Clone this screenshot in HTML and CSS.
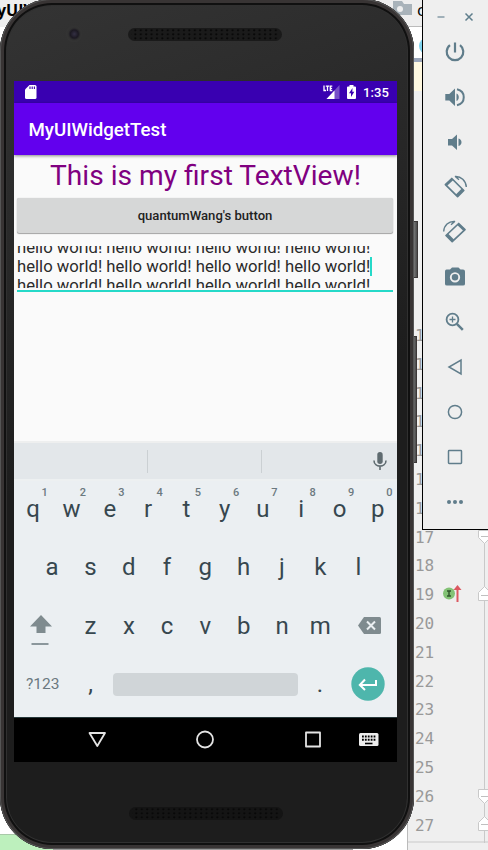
FILE: index.html
```html
<!DOCTYPE html>
<html lang="en">
<head>
<meta charset="utf-8">
<title>Emulator</title>
<link rel="stylesheet" href="styles.css">
</head>
<body>
<div class="desktop">
  <div class="ide">
    <div class="tree"><b class="crumb">yUIW</b><div class="tree-bottom"><b>"</b></div></div>
    <div class="editor">
      <div class="nav-row"><svg width="20" height="16" viewBox="0 0 20 16"><path d="M0 1h9l2 3h8v11H0z" fill="#a9b3ba"/><circle cx="7" cy="9" r="3" fill="#eee"/></svg><span>c</span></div>
      <div class="tab-row"><i></i></div>
      <div class="hint-row"></div>
      <div class="gutter">
        <ol class="lines"><li>10</li><li>11</li><li>12</li><li>13</li><li>14</li><li>15</li><li>16</li><li>17</li><li>18</li><li>19</li><li>20</li><li>21</li><li>22</li><li>23</li><li>24</li><li>25</li><li>26</li><li>27</li></ol>
        <svg class="marker" width="20" height="18" viewBox="0 0 20 18"><circle cx="6" cy="8.500" r="6" fill="#83c275"/><path d="M4 6h4M6 6v5M4 11h4" stroke="#31542b" stroke-width="1.400"/><path d="M14.500 17V3" stroke="#db5860" stroke-width="2"/><path d="M10.500 5l4-5 4 5z" fill="#db5860"/></svg>
        <svg class="folds" width="10" height="320" viewBox="0 0 10 320"><path d="M6.500 0V320" stroke="#c9c9c9"/><g fill="#fff" stroke="#c9c9c9"><path d="M.5 7.500v7l6 6 6-6v-7z"/><path d="M.5 77.500v-8l6-6 6 6v8z"/><path d="M.5 266.500v8l6 6 6-6v-8z"/><path d="M.5 307.500v-8l6-6 6 6v8z"/></g><path d="M3 13.500h7M3 72.500h7M3 273.500h7M3 301.500h7" stroke="#c0c0c0"/></svg>
      </div>
    </div>
  </div>

  <div class="side-key power"></div>
  <div class="side-key volume"></div>

  <div class="phone">
    <div class="bezel top"><div class="camera"></div><svg class="grille" width="154" height="13"><defs><pattern id="dots" width="5.400" height="4" patternUnits="userSpaceOnUse"><circle cx="2" cy="2.300" r="1.100" fill="#080808"/></pattern></defs><rect width="154" height="13" rx="6.500" fill="#1a1a1a"/><rect x="3" width="148" height="12" fill="url(#dots)"/></svg></div>
    <div class="screen">
      <div class="status">
        <svg width="12" height="14" viewBox="0 0 12 14"><path d="M4.500 0H10q1.500 0 1.500 1.500v11Q11.500 14 10 14H1.500Q0 14 0 12.500V4.500z" fill="#fff"/><path d="M5 1.500v2.500M7.200 1.500v2.500M9.400 1.500v2.500" stroke="#3900b1" stroke-width="1.100"/></svg>
        <span class="grow"></span>
        <svg class="signal" width="17" height="14" viewBox="0 0 17 14"><path d="M16.500 0v14H3.500z" fill="#7650c8"/><path d="M11.500 5.400V14H3.500z" fill="#fff"/><path d="M0 0h9.500v7H0z" fill="#3900b1"/><path d="M1 .5v5h2M2.800 1.100h3.400M4.500 1v5M9.300 1.100H7.300v4.400h2M7.300 3.300h1.800" fill="none" stroke="#fff" stroke-width="1.300"/></svg>
        <svg class="battery" width="9" height="14" viewBox="0 0 9 14"><path d="M2.500 0h4v1.500H8q1 0 1 1V13q0 1-1 1H1q-1 0-1-1V2.500q0-1 1-1h1.500z" fill="#fff"/><path d="M5.500 3L2 8.300h2V12l3.300-5.300h-2z" fill="#3900b1"/></svg>
        <span class="clock">1:35</span>
      </div>
      <div class="appbar">MyUIWidgetTest</div>
      <div class="content">
        <div class="headline">This is my first TextView!</div>
        <div class="button">quantumWang's button</div>
        <div class="edit"><div class="edit-text"><div>hello world! hello world! hello world! hello world!</div><div class="current">hello world! hello world! hello world! hello world!<i class="caret"></i></div><div>hello world! hello world! hello world! hello world!</div></div></div>
      </div>
      <div class="keyboard">
        <div class="suggest"><i></i><i></i><span><svg width="14" height="19" viewBox="0 0 14 19"><rect x="4.300" y="0" width="5.400" height="12" rx="2.700" fill="#5f6b70"/><path d="M1 8.500c0 7.500 12 7.500 12 0M7 14v4" fill="none" stroke="#5f6b70" stroke-width="1.600"/></svg></span></div>
        <div class="keys">
          <div class="row"><b>q<sup>1</sup></b><b>w<sup>2</sup></b><b>e<sup>3</sup></b><b>r<sup>4</sup></b><b>t<sup>5</sup></b><b>y<sup>6</sup></b><b>u<sup>7</sup></b><b>i<sup>8</sup></b><b>o<sup>9</sup></b><b>p<sup>0</sup></b></div>
          <div class="row inset"><b>a</b><b>s</b><b>d</b><b>f</b><b>g</b><b>h</b><b>j</b><b>k</b><b>l</b></div>
          <div class="row third"><span class="wide"><svg class="shift" width="22" height="31" viewBox="0 0 22 31"><path d="M11 0l11 11.500h-6.500V18h-9v-6.500H0z" fill="#7f8b8f"/><path d="M1.500 29h17" stroke="#8b979c" stroke-width="2"/></svg></span><b>z</b><b>x</b><b>c</b><b>v</b><b>b</b><b>n</b><b>m</b><span class="wide back"><svg width="23" height="17" viewBox="0 0 23 17"><path d="M6 0h15.500Q23 0 23 1.500v14Q23 17 21.500 17H6L0 8.500z" fill="#7f8b8f"/><path d="M9 4.500l8 8m0-8l-8 8" stroke="#ebeff2" stroke-width="2"/></svg></span></div>
          <div class="row last"><span class="wide sym">?123</span><b>,</b><span class="space"></span><b>.</b><span class="wide enter"><svg width="34" height="34" viewBox="0 0 34 34"><circle cx="17" cy="17" r="16.700" fill="#4eb6ac"/><path d="M25 13v5H9m5-5.500L8.800 18l5.200 5" fill="none" stroke="#fff" stroke-width="2"/></svg></span></div>
        </div>
      </div>
      <div class="navbar">
        <svg width="383" height="45" viewBox="0 0 383 45" fill="none" stroke="#e4e4e4" stroke-width="1.800" stroke-linejoin="round"><path d="M75.500 15h15.500l-7.700 13z"/><circle cx="191" cy="21.500" r="8"/><path d="M292 14.500h14v14h-14z"/><rect x="345" y="15" width="19.500" height="13" rx="1.500" fill="#eee" stroke="none"/><path d="M348 18.500h14M348 21.700h14" stroke="#000" stroke-width="2" stroke-dasharray="1.800 1.100"/><path d="M351 25.500h7.500" stroke="#000" stroke-width="1.600"/></svg>
      </div>
    </div>
    <div class="bezel bottom"><svg class="grille" width="154" height="13"><rect width="154" height="13" rx="6.500" fill="#141414"/><rect x="3" width="148" height="12" fill="url(#dots)"/></svg></div>
  </div>

  <div class="toolbar">
    <div class="window-buttons"><svg width="64" height="20" viewBox="0 0 64 20"><path d="M14.500 9h7" stroke="#a0b0b9" stroke-width="2"/><path d="M42.500 5.500l7 7m0-7l-7 7" stroke="#5f7e8c" stroke-width="1.500"/></svg></div>
    <svg viewBox="0 0 24 24"><path d="M12 2.500v10M7 5.200a8.300 8.300 0 1 0 10 0" fill="none" stroke="#607d8b" stroke-width="2.200"/></svg>
    <svg viewBox="0 0 24 24"><path d="M2.300 9v6.500h4L12 21V3.500L6.300 9z" fill="#607d8b"/><path d="M13.500 8.500c3 1 3 6.500 0 7.500z" fill="#607d8b"/><path d="M14 4.300c9 2 9 14 0 16" fill="none" stroke="#607d8b" stroke-width="2"/></svg>
    <svg viewBox="0 0 24 24"><path d="M5 9v6.500h4L14 20V4.500L9 9z" fill="#607d8b"/><path d="M15.500 8.500c4 1 4 6.500 0 7.500z" fill="#607d8b"/></svg>
    <svg viewBox="0 0 24 24"><path d="M8.800 3.500L20.800 15.500l-6.200 6.200L2.400 9.600z" fill="none" stroke="#607d8b" stroke-width="1.700" stroke-linejoin="round"/><path d="M2.400 9.600l6.400-6.100 1.500 1.500-6.400 6.100zM20.800 15.500l-6.200 6.200-2-2 6.200-6.200z" fill="#607d8b"/><path d="M12 1.500c6-.5 11 4.500 11.300 10.500M12 1.200l4 3.500" fill="none" stroke="#607d8b" stroke-width="1.400"/></svg>
    <svg viewBox="0 0 24 24"><path d="M15.700 3.500L3 15.500l6.200 6.200L22 9.600z" fill="none" stroke="#607d8b" stroke-width="1.700" stroke-linejoin="round"/><path d="M22 9.600l-6.300-6.100-1.500 1.500 6.300 6.100zM3 15.500l6.200 6.200 2-2L5 13.500z" fill="#607d8b"/><path d="M12 1.500C5.500 1 1 5.500.7 11.500M12 1.200L8 4.700" fill="none" stroke="#607d8b" stroke-width="1.400"/></svg>
    <svg viewBox="0 0 24 24"><path d="M3.500 4.500H7l2-2h6.500l2 2H20q2 0 2 2V19q0 1.500-2 1.500H4Q2 20.500 2 19V6.500q0-2 1.500-2z" fill="#607d8b"/><circle cx="12" cy="12.300" r="4.200" fill="none" stroke="#efefef" stroke-width="1.900"/></svg>
    <svg viewBox="0 0 24 24"><g fill="none" stroke="#607d8b"><circle cx="9.500" cy="9.500" r="5.900" stroke-width="1.800"/><path d="M9.500 6.500v6M6.500 9.500h6" stroke-width="1.300"/><path d="M13.800 13.800l6 6" stroke-width="2.500"/></g></svg>
    <svg viewBox="0 0 24 24"><path d="M18 5v14L6 12z" fill="none" stroke="#607d8b" stroke-width="1.500"/></svg>
    <svg viewBox="0 0 24 24"><circle cx="12" cy="12" r="6.600" fill="none" stroke="#607d8b" stroke-width="1.500"/></svg>
    <svg viewBox="0 0 24 24"><rect x="5.500" y="5.500" width="13" height="13" rx=".7" fill="none" stroke="#607d8b" stroke-width="1.500"/></svg>
    <svg viewBox="0 0 24 24"><g fill="#607d8b"><circle cx="6" cy="12" r="2"/><circle cx="12" cy="12" r="2"/><circle cx="18" cy="12" r="2"/></g></svg>
  </div>
</div>
</body>
</html>
```
FILE: styles.css
```css
* { box-sizing: border-box; }
body { margin: 0; font-family: Roboto, sans-serif; }
svg { display: block; flex: none; }
.desktop { position: relative; width: 488px; height: 850px; overflow: hidden; background: #fff; }
.ide { display: flex; height: 850px; }
.tree { width: 407px; display: flex; flex-direction: column; justify-content: space-between; background: linear-gradient(#eee 0 27px, #fff 27px); }
.crumb { font: bold 16px/20px "Open Sans", sans-serif; margin-left: -3px; color: #000; }
.tree-bottom { width: 353px; height: 16px; background: linear-gradient(90deg, #bdf0bd 0 53px, #9a9a9a 53px); border-top: 1px solid #a9c9a9; overflow: hidden; padding-left: 32px; color: #1c2a80; font: bold 18px/26px "Liberation Mono", monospace; }
.editor { flex: 1; border-left: 1px solid #bbb; background: #efefef; }
.nav-row { height: 27px; margin-left: -15px; display: flex; gap: 4px; font: 17px/20px "Open Sans", sans-serif; color: #000; background: #eee; border-bottom: 1px solid #bbb; }
.tab-row { height: 35px; background: #fff; border-bottom: 4px solid #9ba5b9; padding: 11px 0 0 11px; }
.tab-row i { display: block; width: 16px; height: 16px; border-radius: 50%; background: #7fd3ee; }
.hint-row { height: 29px; background: #fff8e0; }
.gutter { position: relative; padding: 231px 0 0 7px; height: 752px; border-bottom: 2px solid #dcdcdc; }
.lines { list-style: none; margin: 0; padding: 0; font: 16px/28.8px "DejaVu Sans Mono", monospace; color: #999; letter-spacing: -.1px; }
.marker { position: absolute; left: 35px; top: 494px; }
.folds { position: absolute; right: 0; top: 432px; }
.side-key { position: absolute; background: linear-gradient(90deg, #777, #4a4a4a); border: 1px solid #3b3737; }
.power { left: 413px; top: 221px; width: 5px; height: 57px; }
.volume { left: 412px; top: 336px; width: 5px; height: 127px; }
.phone { position: absolute; left: 0; top: -1px; width: 414px; height: 850px; padding: 0 17px 0 14px; border-radius: 52px; background: linear-gradient(160deg, #343434, #292929 25%, #1d1d1d 50%, #1d1d1d); box-shadow: inset 0 0 0 1px #555, inset 0 0 0 4px #383434, inset 0 0 0 6px #101010, inset 0 0 0 7px #303030; }
.bezel { height: 82px; display: flex; align-items: flex-start; }
.top { padding: 29px 0 0 52px; }
.camera { width: 16px; height: 16px; margin-top: -2px; margin-left: 0; border-radius: 50%; background: radial-gradient(circle at 52% 50%, #343044 0, #1c1922 4px, #303030 6px, #343434 8px); }
.top .grille { margin-left: 46px; }
.bottom { padding: 45px 0 0 115px; }
.screen { width: 383px; height: 681px; overflow: hidden; display: flex; flex-direction: column; background: #fafafa; }
.status { height: 22px; background: #3900b1; display: flex; align-items: center; padding: 0 8px 0 11px; color: #fff; }
.grow { flex: 1; }
.signal { margin-right: 7px; }
.battery { margin-right: 7px; }
.clock { font-weight: 500; font-size: 13px; line-height: 22px; letter-spacing: .1px; padding-top: 1px; }
.appbar { height: 52px; background: #6200ee; color: #fff; font-weight: 500; font-size: 18.7px; line-height: 54px; padding-left: 14.5px; box-shadow: 0 1px 3px #0007; position: relative; flex: none; }
.content { height: 286px; flex: none; }
.headline { height: 42px; line-height: 42px; font-size: 28.15px; color: #800080; text-align: center; white-space: nowrap; }
.button { height: 35px; margin: 1px 4px 0 3px; background: #d6d7d7; border-radius: 2px; box-shadow: 0 1px 1px #0005, 0 0 1px #0004; text-align: center; font-weight: 500; font-size: 13.1px; line-height: 36px; color: #222; }
.edit { height: 46px; margin: 13px 4px 0 3px; border-bottom: 2px solid #25d9c8; }
.edit-text { height: 42px; overflow: hidden; font-size: 16.68px; line-height: 19.4px; color: #2b2b2b; white-space: nowrap; }
.edit-text div:first-child { margin-top: -8.4px; }
.current { display: flex; }
.caret { width: 2px; height: 19px; background: #25d9c8; }
.keyboard { height: 276px; flex: none; background: #ebeff2; }
.suggest { height: 40px; display: flex; align-items: center; background: #e3e7ea; border-top: 2px solid #eeefef; border-bottom: 2px solid #edf0f1; }
.suggest i { height: 23px; width: 134px; border-right: 1px solid #cbd0d3; }
.suggest i + i { width: 114px; }
.suggest span { margin-left: auto; padding-right: 10px; }
.keys { height: 236px; margin-top: -1px; }
.row { display: flex; height: 58.4px; color: #37474f; font-size: 24px; line-height: 58px; }
.row b { position: relative; width: 38.3px; font-weight: 400; text-align: center; }
.row sup { position: absolute; right: 4.5px; top: 6px; font-size: 11px; line-height: 14px; font-weight: 500; color: #6b7980; }
.inset { padding-left: 19px; }
.wide { width: 57.4px; display: flex; align-items: center; }
.shift { margin: 9px 0 0 16px; }
.back { padding-left: 19px; }
.sym { font-size: 15.5px; padding-left: 12px; color: #6b7980; }
.space { width: 185px; height: 23px; margin: 18px 3px 0; border-radius: 4px; background: #d0d5d8; }
.enter { padding-left: 12px; }
.navbar { height: 45px; background: #000; border-top: 1px solid #26383a; flex: none; }
.toolbar { position: absolute; left: 422px; top: -1px; width: 70px; height: 531px; background: #efefef; border: 1px solid #000; display: flex; flex-direction: column; padding-left: 20px; gap: 21px; }
.toolbar > svg { width: 24px; height: 24px; }
.window-buttons { height: 19px; margin-left: -20px; padding-top: 8px; }
```
